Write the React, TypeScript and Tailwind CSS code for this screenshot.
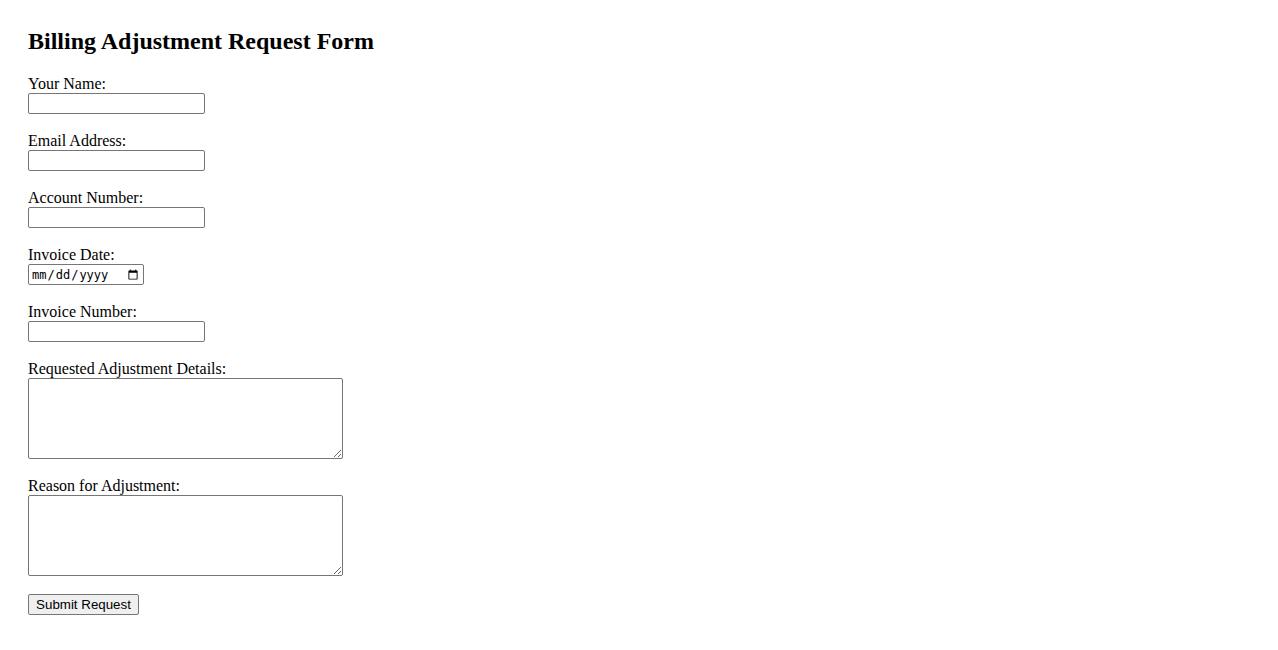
export default function App() {
  const textFields = [
    { label: "Your Name:", type: "text" },
    { label: "Email Address:", type: "email" },
    { label: "Account Number:", type: "text" },
  ];

  return (
    <div className="min-h-screen bg-white px-[28px] pt-[27px] font-['Liberation_Serif',serif] text-[16px] text-black">
      <h2 className="text-[24px] font-bold leading-[28px]">Billing Adjustment Request Form</h2>

      <form className="mt-[19px] flex flex-col items-start" onSubmit={(e) => e.preventDefault()}>
        {textFields.map((f) => (
          <div key={f.label} className="mb-[17px] flex flex-col items-start">
            <label className="leading-[19px]">{f.label}</label>
            <input
              type={f.type}
              className="h-[21px] w-[177px] rounded-[2px] border border-[#767676] bg-white px-[2px] font-['Liberation_Sans',sans-serif] text-[13px] outline-none"
            />
          </div>
        ))}

        {/* date row */}
        <div className="mb-[17px] flex flex-col items-start">
          <label className="leading-[19px]">Invoice Date:</label>
          <input
            type="date"
            className="h-[21px] w-[116px] rounded-[2px] border border-[#767676] bg-white px-[2px] font-['DejaVu_Sans_Mono',monospace] text-[12px] text-black outline-none"
          />
        </div>

        <div className="mb-[17px] flex flex-col items-start">
          <label className="leading-[19px]">Invoice Number:</label>
          <input
            type="text"
            className="h-[21px] w-[177px] rounded-[2px] border border-[#767676] bg-white px-[2px] font-['Liberation_Sans',sans-serif] text-[13px] outline-none"
          />
        </div>

        <div className="mb-[17px] flex flex-col items-start">
          <label className="leading-[19px]">Requested Adjustment Details:</label>
          <textarea className="h-[81px] w-[315px] rounded-[2px] border border-[#767676] bg-white p-[2px] font-['Liberation_Mono',monospace] text-[13px] outline-none" />
        </div>

        <div className="mb-[18px] flex flex-col items-start">
          <label className="leading-[19px]">Reason for Adjustment:</label>
          <textarea className="h-[81px] w-[315px] rounded-[2px] border border-[#767676] bg-white p-[2px] font-['Liberation_Mono',monospace] text-[13px] outline-none" />
        </div>

        <button
          type="submit"
          className="h-[21px] w-[111px] rounded-[2px] border border-[#767676] bg-[#efefef] px-[6px] font-['Liberation_Sans',sans-serif] text-[13.33px] leading-none text-black"
        >
          Submit Request
        </button>
      </form>
    </div>
  );
}
